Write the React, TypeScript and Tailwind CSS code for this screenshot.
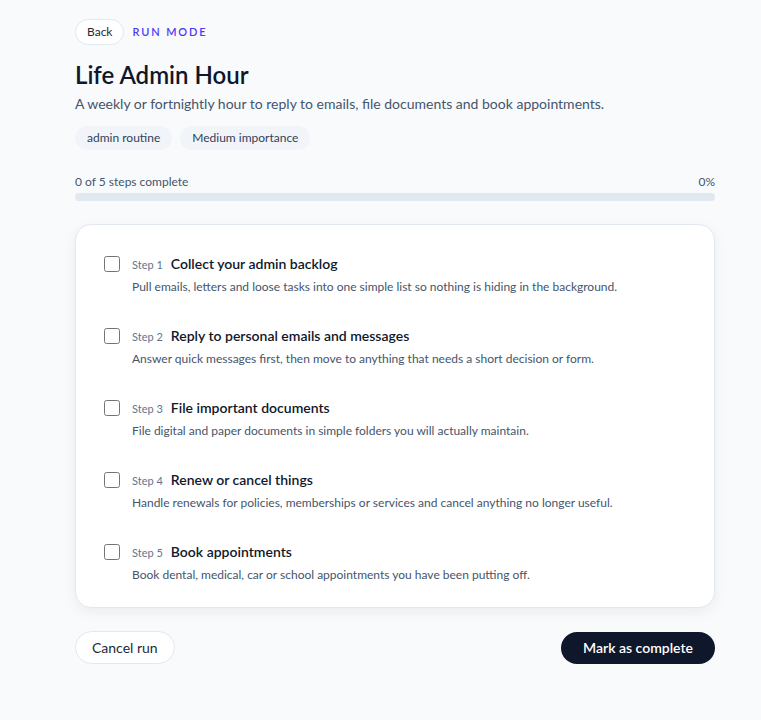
import { useState } from "react";

const steps = [
  {
    title: "Collect your admin backlog",
    text: "Pull emails, letters and loose tasks into one simple list so nothing is hiding in the background.",
  },
  {
    title: "Reply to personal emails and messages",
    text: "Answer quick messages first, then move to anything that needs a short decision or form.",
  },
  {
    title: "File important documents",
    text: "File digital and paper documents in simple folders you will actually maintain.",
  },
  {
    title: "Renew or cancel things",
    text: "Handle renewals for policies, memberships or services and cancel anything no longer useful.",
  },
  {
    title: "Book appointments",
    text: "Book dental, medical, car or school appointments you have been putting off.",
  },
];

export default function App() {
  const [done, setDone] = useState<boolean[]>(steps.map(() => false));
  const count = done.filter(Boolean).length;
  const pct = Math.round((count / steps.length) * 100);

  return (
    <div className="min-h-screen bg-[#f8fafc] font-['Lato',sans-serif] text-[#0f172a]">
      <div className="w-[640px] pt-[19px] ml-[75px]">
        <div className="flex items-center gap-2">
          <button className="h-[26px] rounded-full border border-slate-200 bg-white px-[11px] text-xs text-slate-800">
            Back
          </button>
          <span className="text-[11px] font-semibold tracking-[0.17em] text-indigo-600">RUN MODE</span>
        </div>

        <h1 className="mt-[14px] text-2xl font-semibold leading-8">Life Admin Hour</h1>
        <p className="mt-[3px] text-sm leading-5 text-slate-600">
          A weekly or fortnightly hour to reply to emails, file documents and book appointments.
        </p>

        <div className="mt-[12px] flex gap-2">
          <span className="rounded-full bg-slate-100 px-3 py-[4px] text-xs leading-4 text-slate-700">admin routine</span>
          <span className="rounded-full bg-slate-100 px-3 py-[4px] text-xs leading-4 text-slate-700">Medium importance</span>
        </div>

        <div className="mt-[24px] flex justify-between text-xs leading-4 text-slate-600">
          <span>
            {count} of {steps.length} steps complete
          </span>
          <span>{pct}%</span>
        </div>
        <div className="mt-[3px] h-2 rounded-full bg-slate-200">
          <div className="h-2 rounded-full bg-slate-900" style={{ width: `${pct}%` }} />
        </div>

        <div className="mt-[23px] rounded-2xl border border-slate-200 bg-white px-7 pt-[29px] pb-[24px] shadow-[0_4px_14px_rgba(15,23,42,0.06)]">
          <ul className="flex flex-col gap-[31px]">
            {steps.map((s, i) => (
              <li key={i} className="flex gap-3">
                <input
                  type="checkbox"
                  checked={done[i]}
                  onChange={() => setDone(done.map((d, j) => (j === i ? !d : d)))}
                  className="mt-[2px] h-4 w-4 shrink-0"
                />
                <div>
                  <div className="flex items-baseline gap-2 leading-5">
                    <span className="text-[11px] text-slate-500">Step {i + 1}</span>
                    <span className="text-sm font-semibold">{s.title}</span>
                  </div>
                  <p className="mt-[4px] text-xs leading-4 text-slate-600">{s.text}</p>
                </div>
              </li>
            ))}
          </ul>
        </div>

        <div className="mt-[23px] flex items-center justify-between">
          <button className="h-[33px] rounded-full border border-slate-200 bg-white px-4 text-sm text-slate-800">
            Cancel run
          </button>
          <button className="h-[32px] rounded-full bg-[#0f172a] px-[22px] text-sm font-semibold text-white">
            Mark as complete
          </button>
        </div>
      </div>
    </div>
  );
}
